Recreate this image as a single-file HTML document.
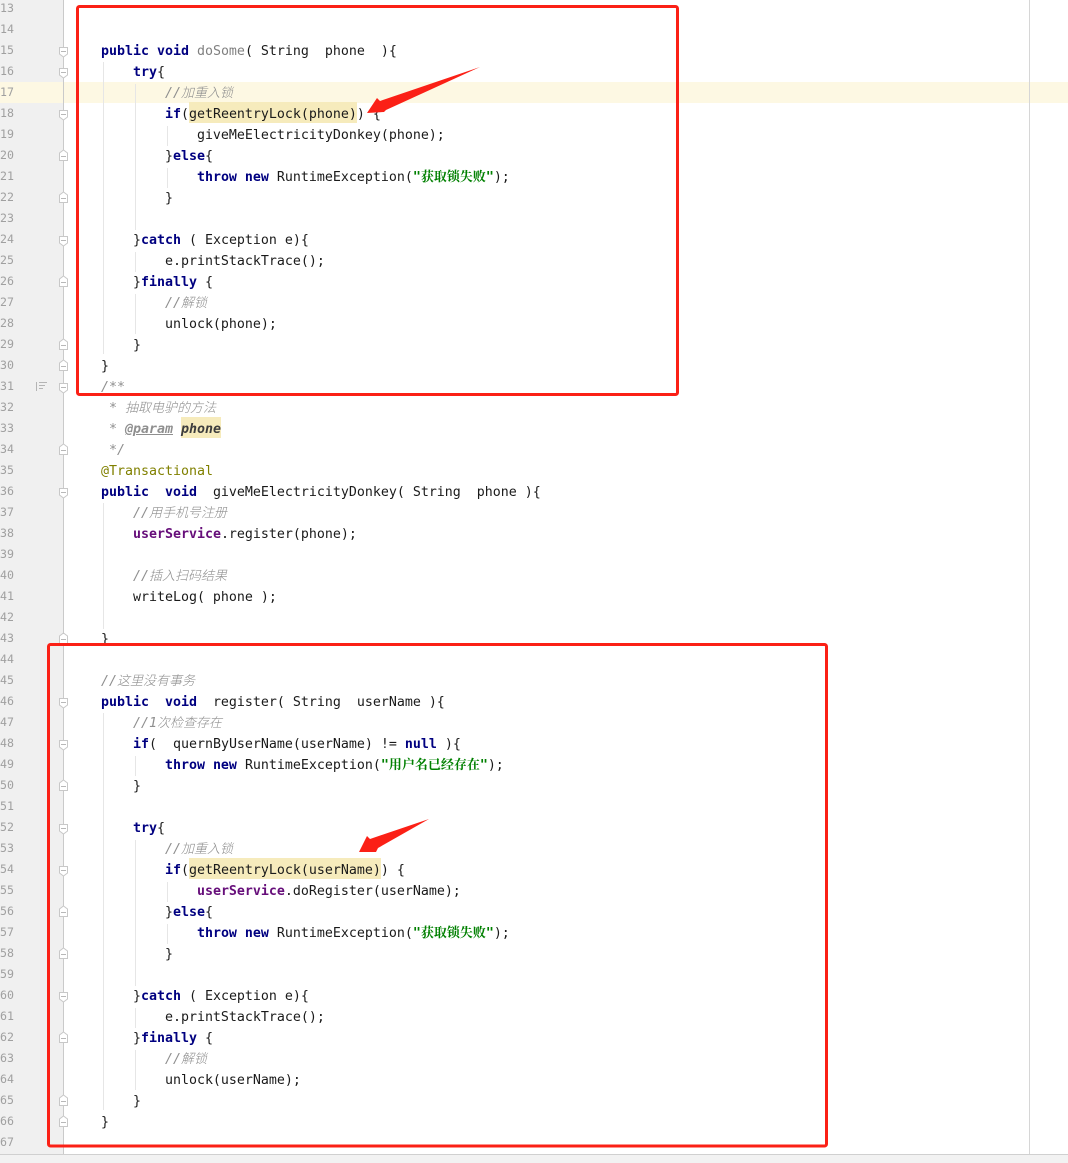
<!DOCTYPE html>
<html lang="zh">
<head>
<meta charset="utf-8">
<title>Code</title>
<style>
html,body{margin:0;padding:0;background:#fff}
#p{position:relative;width:1068px;height:1163px;overflow:hidden;background:#fff;font-family:"DejaVu Sans Mono","Liberation Mono","Noto Sans CJK SC",monospace;font-size:13.3px;color:#1a1a1a}
.a{position:absolute}
.l{position:absolute;left:101px;height:21px;line-height:21px;white-space:pre;letter-spacing:-.01px;margin-top:2px}
.n{position:absolute;left:0;height:21px;line-height:21px;font-size:11.6px;color:#a0a0a0;margin-top:1px}
b{color:#000080;font-weight:bold}
.g{color:#808080}
.c{color:#8f8f8f;font-style:italic}
.z{font-family:"Noto Sans CJK SC",sans-serif;font-size:13px;font-weight:300;line-height:1px}
.s{color:#008000;font-weight:bold}
.s .z{font-weight:700;font-family:"Noto Serif CJK SC",serif}
.f{color:#660e7a;font-weight:bold}
.an{color:#808000}
.h{background:#f6ebbc;display:inline-block;height:21px}
.i{position:absolute;width:1px;background:#e6e6e6}
</style>
</head>
<body>
<div id="p">
<div class="a" style="left:0;top:0;width:63px;height:1154px;background:#f0f0f0"></div>
<div class="a" style="left:0;top:82px;width:1068px;height:21px;background:#fdf8e3"></div>
<div class="a" style="left:63px;top:0;width:1px;height:1154px;background:#cacaca"></div>
<div class="a" style="left:1029px;top:0;width:1px;height:1154px;background:#d6d6d6"></div>
<div class="a" style="left:0;top:1154px;width:1068px;height:9px;background:#f2f2f2;border-top:1px solid #d0d0d0;box-sizing:border-box"></div>

<div class="i" style="left:103px;top:62px;height:292px"></div>
<div class="i" style="left:135px;top:84px;height:146px"></div>
<div class="i" style="left:135px;top:252px;height:20px"></div>
<div class="i" style="left:135px;top:294px;height:40px"></div>
<div class="i" style="left:167px;top:126px;height:20px"></div>
<div class="i" style="left:167px;top:168px;height:20px"></div>
<div class="i" style="left:103px;top:503px;height:126px"></div>
<div class="i" style="left:103px;top:713px;height:397px"></div>
<div class="i" style="left:135px;top:756px;height:20px"></div>
<div class="i" style="left:135px;top:840px;height:146px"></div>
<div class="i" style="left:135px;top:1008px;height:20px"></div>
<div class="i" style="left:135px;top:1050px;height:40px"></div>
<div class="i" style="left:167px;top:882px;height:20px"></div>
<div class="i" style="left:167px;top:924px;height:20px"></div>

<div class="n" style="top:-3px">13</div>
<div class="n" style="top:18px">14</div>
<div class="n" style="top:39px">15</div>
<div class="n" style="top:60px">16</div>
<div class="n" style="top:81px">17</div>
<div class="n" style="top:102px">18</div>
<div class="n" style="top:123px">19</div>
<div class="n" style="top:144px">20</div>
<div class="n" style="top:165px">21</div>
<div class="n" style="top:186px">22</div>
<div class="n" style="top:207px">23</div>
<div class="n" style="top:228px">24</div>
<div class="n" style="top:249px">25</div>
<div class="n" style="top:270px">26</div>
<div class="n" style="top:291px">27</div>
<div class="n" style="top:312px">28</div>
<div class="n" style="top:333px">29</div>
<div class="n" style="top:354px">30</div>
<div class="n" style="top:375px">31</div>
<div class="n" style="top:396px">32</div>
<div class="n" style="top:417px">33</div>
<div class="n" style="top:438px">34</div>
<div class="n" style="top:459px">35</div>
<div class="n" style="top:480px">36</div>
<div class="n" style="top:501px">37</div>
<div class="n" style="top:522px">38</div>
<div class="n" style="top:543px">39</div>
<div class="n" style="top:564px">40</div>
<div class="n" style="top:585px">41</div>
<div class="n" style="top:606px">42</div>
<div class="n" style="top:627px">43</div>
<div class="n" style="top:648px">44</div>
<div class="n" style="top:669px">45</div>
<div class="n" style="top:690px">46</div>
<div class="n" style="top:711px">47</div>
<div class="n" style="top:732px">48</div>
<div class="n" style="top:753px">49</div>
<div class="n" style="top:774px">50</div>
<div class="n" style="top:795px">51</div>
<div class="n" style="top:816px">52</div>
<div class="n" style="top:837px">53</div>
<div class="n" style="top:858px">54</div>
<div class="n" style="top:879px">55</div>
<div class="n" style="top:900px">56</div>
<div class="n" style="top:921px">57</div>
<div class="n" style="top:942px">58</div>
<div class="n" style="top:963px">59</div>
<div class="n" style="top:984px">60</div>
<div class="n" style="top:1005px">61</div>
<div class="n" style="top:1026px">62</div>
<div class="n" style="top:1047px">63</div>
<div class="n" style="top:1068px">64</div>
<div class="n" style="top:1089px">65</div>
<div class="n" style="top:1110px">66</div>
<div class="n" style="top:1131px">67</div>

<div class="a" style="left:181px;top:417px;width:40px;height:21px;background:#f6ebbc"></div>
<div class="a" style="left:189px;top:102px;width:168px;height:21px;background:#f6ebbc"></div>
<div class="a" style="left:189px;top:858px;width:192px;height:21px;background:#f6ebbc"></div>

<div class="l" style="top:39px"><b>public void </b><span class="g">doSome</span>( String  phone  ){</div>
<div class="l" style="top:60px">    <b>try</b>{</div>
<div class="l c" style="top:81px">        //<span class="z">加重入锁</span></div>
<div class="l" style="top:102px">        <b>if</b>(getReentryLock(phone)) {</div>
<div class="l" style="top:123px">            giveMeElectricityDonkey(phone);</div>
<div class="l" style="top:144px">        }<b>else</b>{</div>
<div class="l" style="top:165px">            <b>throw new </b>RuntimeException(<span class="s">"<span class="z">获取锁失败</span>"</span>);</div>
<div class="l" style="top:186px">        }</div>
<div class="l" style="top:228px">    }<b>catch</b> ( Exception e){</div>
<div class="l" style="top:249px">        e.printStackTrace();</div>
<div class="l" style="top:270px">    }<b>finally</b> {</div>
<div class="l c" style="top:291px">        //<span class="z">解锁</span></div>
<div class="l" style="top:312px">        unlock(phone);</div>
<div class="l" style="top:333px">    }</div>
<div class="l" style="top:354px">}</div>
<div class="l c" style="top:375px">/**</div>
<div class="l c" style="top:396px"> * <span class="z">抽取电驴的方法</span></div>
<div class="l c" style="top:417px"> * <span style="font-weight:bold;text-decoration:underline">@param</span> <span style="font-weight:bold;color:#3d3d3d">phone</span></div>
<div class="l c" style="top:438px"> */</div>
<div class="l an" style="top:459px">@Transactional</div>
<div class="l" style="top:480px"><b>public  void  </b>giveMeElectricityDonkey( String  phone ){</div>
<div class="l c" style="top:501px">    //<span class="z">用手机号注册</span></div>
<div class="l" style="top:522px">    <span class="f">userService</span>.register(phone);</div>
<div class="l c" style="top:564px">    //<span class="z">插入扫码结果</span></div>
<div class="l" style="top:585px">    writeLog( phone );</div>
<div class="l" style="top:627px">}</div>
<div class="l c" style="top:669px">//<span class="z">这里没有事务</span></div>
<div class="l" style="top:690px"><b>public  void  </b>register( String  userName ){</div>
<div class="l c" style="top:711px">    //1<span class="z">次检查存在</span></div>
<div class="l" style="top:732px">    <b>if</b>(  quernByUserName(userName) != <b>null</b> ){</div>
<div class="l" style="top:753px">        <b>throw new </b>RuntimeException(<span class="s">"<span class="z">用户名已经存在</span>"</span>);</div>
<div class="l" style="top:774px">    }</div>
<div class="l" style="top:816px">    <b>try</b>{</div>
<div class="l c" style="top:837px">        //<span class="z">加重入锁</span></div>
<div class="l" style="top:858px">        <b>if</b>(getReentryLock(userName)) {</div>
<div class="l" style="top:879px">            <span class="f">userService</span>.doRegister(userName);</div>
<div class="l" style="top:900px">        }<b>else</b>{</div>
<div class="l" style="top:921px">            <b>throw new </b>RuntimeException(<span class="s">"<span class="z">获取锁失败</span>"</span>);</div>
<div class="l" style="top:942px">        }</div>
<div class="l" style="top:984px">    }<b>catch</b> ( Exception e){</div>
<div class="l" style="top:1005px">        e.printStackTrace();</div>
<div class="l" style="top:1026px">    }<b>finally</b> {</div>
<div class="l c" style="top:1047px">        //<span class="z">解锁</span></div>
<div class="l" style="top:1068px">        unlock(userName);</div>
<div class="l" style="top:1089px">    }</div>
<div class="l" style="top:1110px">}</div>

<svg class="a" style="left:0;top:0" width="1068" height="1163" viewBox="0 0 1068 1163">
<defs>
<g id="o"><path d="M-4 -3H4V3.500L0 6.500L-4 3.500Z" fill="#fff" stroke="#c8c8c8"/><path d="M-2.500 1H2.500" stroke="#b8b8b8"/></g>
<g id="e"><path d="M-4 5H4V-2.500L0 -5.500L-4 -2.500Z" fill="#fff" stroke="#c8c8c8"/><path d="M-2.500 1H2.500" stroke="#b8b8b8"/></g>
</defs>
<use href="#o" x="63.500" y="50.500"/>
<use href="#o" x="63.500" y="71.500"/>
<use href="#o" x="63.500" y="113.500"/>
<use href="#e" x="63.500" y="155.500"/>
<use href="#e" x="63.500" y="197.500"/>
<use href="#o" x="63.500" y="239.500"/>
<use href="#e" x="63.500" y="281.500"/>
<use href="#e" x="63.500" y="344.500"/>
<use href="#e" x="63.500" y="365.500"/>
<use href="#o" x="63.500" y="386.500"/>
<use href="#e" x="63.500" y="449.500"/>
<use href="#o" x="63.500" y="491.500"/>
<use href="#e" x="63.500" y="638.500"/>
<use href="#o" x="63.500" y="701.500"/>
<use href="#o" x="63.500" y="743.500"/>
<use href="#e" x="63.500" y="785.500"/>
<use href="#o" x="63.500" y="827.500"/>
<use href="#o" x="63.500" y="869.500"/>
<use href="#e" x="63.500" y="911.500"/>
<use href="#e" x="63.500" y="953.500"/>
<use href="#o" x="63.500" y="995.500"/>
<use href="#e" x="63.500" y="1037.500"/>
<use href="#e" x="63.500" y="1100.500"/>
<use href="#e" x="63.500" y="1121.500"/>
<path d="M36.500 382V391M39 382.500H47M39 385.500H45M39 388.500H43" stroke="#b4b4b4" fill="none"/>
<rect x="77.500" y="6.500" width="600" height="388" rx="2" fill="none" stroke="#fb2016" stroke-width="3"/>
<rect x="48.500" y="644.500" width="778" height="501.500" rx="2" fill="none" stroke="#fb2016" stroke-width="3"/>
<polygon points="480,67 380,101 377,98 367,113 384,112 386,110" fill="#fb2016"/>
<polygon points="429,819 370,839 367,836 359,852 376,852 378,848" fill="#fb2016"/>
</svg>
</div>
</body>
</html>
